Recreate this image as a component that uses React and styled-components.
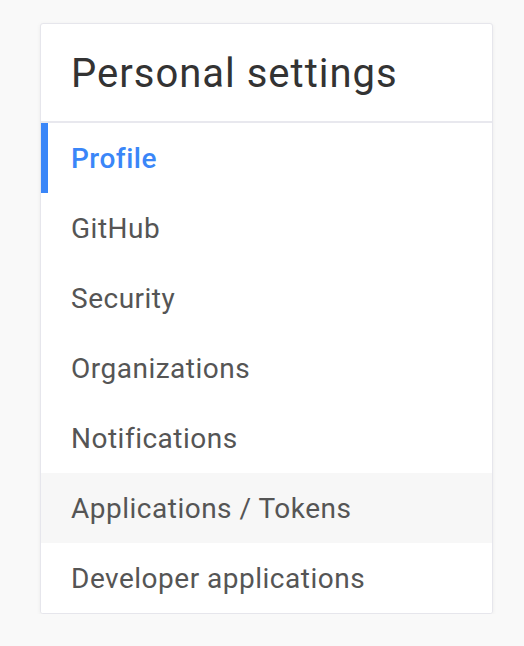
import React from 'react'
import styled, { createGlobalStyle } from 'styled-components'

const GlobalStyle = createGlobalStyle`
  html, body {
    margin: 0;
    padding: 0;
    background-color: #f9f9f9;
    font-family: Roboto, "Liberation Sans", Arial, sans-serif;
  }
`

const Page = styled.div`
  padding: 23px 0 0 40px;
`

const Card = styled.div`
  width: 451px;
  background-color: white;
  border: 1px solid #e6e6ec;
  border-radius: 3px;
  box-shadow: 0 1px 4px rgba(0, 0, 0, 0.06);
  overflow: hidden;
`

const Header = styled.div`
  height: 97px;
  display: flex;
  align-items: center;
  padding-left: 30px;
  border-bottom: 2px solid #e8e8ee;
`

const Title = styled.h1`
  margin: 0;
  padding-top: 2px;
  font-size: 40px;
  font-weight: 400;
  letter-spacing: 1px;
  color: #333333;
`

const Menu = styled.ul`
  list-style: none;
  margin: 0;
  padding: 0;
`

const Item = styled.li`
  height: 70px;
  display: flex;
  align-items: center;
  padding-left: ${({ active }) => (active ? '23px' : '30px')};
  border-left: ${({ active }) => (active ? '7px solid #3a86f8' : 'none')};
  background-color: ${({ hovered }) => (hovered ? '#f7f7f7' : 'white')};
  color: ${({ active }) => (active ? '#3a86f8' : '#555555')};
  font-size: 28px;
  font-weight: ${({ active }) => (active ? 500 : 400)};
  letter-spacing: 0.5px;
  cursor: pointer;
`

const items = [
    'Profile',
    'GitHub',
    'Security',
    'Organizations',
    'Notifications',
    'Applications / Tokens',
    'Developer applications',
]

const App = () => {
    return (
        <Page>
            <GlobalStyle />
            <Card>
                <Header>
                    <Title>Personal settings</Title>
                </Header>
                <Menu>
                    {items.map((label, i) => (
                        <Item key={label} active={i === 0} hovered={i === 5}>
                            {label}
                        </Item>
                    ))}
                </Menu>
            </Card>
        </Page>
    )
}

export default App
